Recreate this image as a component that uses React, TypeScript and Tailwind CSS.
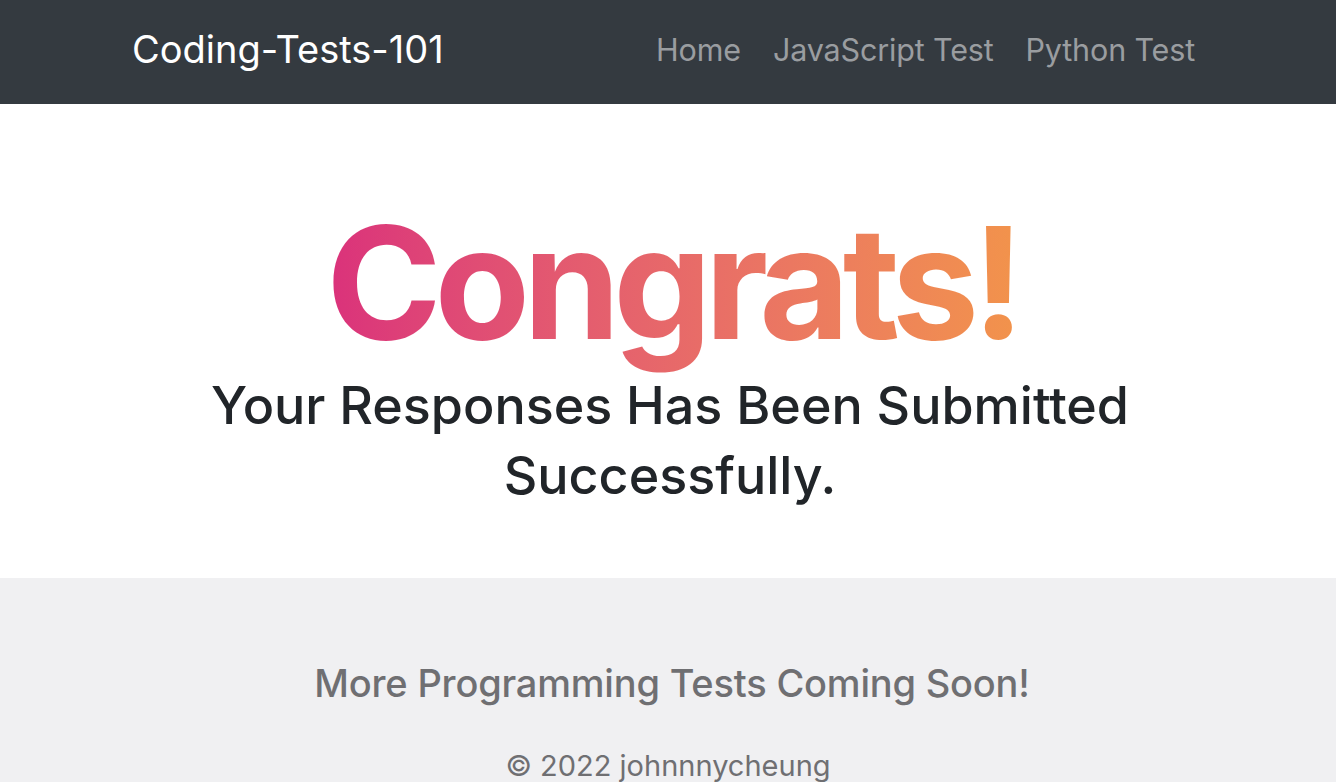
export default function App() {
  return (
    <div className="h-screen overflow-hidden bg-white font-['Inter','Noto_Sans',sans-serif] text-[#212529]">
      <Navbar />
      <main className="flex flex-col items-center h-[474px] pt-[101px] text-center">
        <h1 className="text-[156px] font-bold leading-none tracking-[-0.045em] bg-gradient-to-r from-[#da2f7b] to-[#f2934b] bg-clip-text text-transparent pb-[14px] pl-[8px]">
          Congrats!
        </h1>
        <p className="text-[52px] font-medium leading-[70px] w-[1000px] -mt-[4px] pl-[4px]">
          Your Responses Has Been Submitted
          <br />
          Successfully.
        </p>
      </main>
      <Footer />
    </div>
  );
}

function Navbar() {
  const links = ["Home", "JavaScript Test", "Python Test"];
  return (
    <nav className="h-[104px] bg-[#343a40]">
      <div className="flex h-full items-center justify-between pl-[132px] pr-[141px]">
        <a className="text-[38px] text-white leading-none pb-[6px]">Coding-Tests-101</a>
        <ul className="flex gap-[32px] pb-[4px]">
          {links.map((l) => (
            <li key={l} className="text-[30.5px] text-[#9a9da0] leading-none tracking-[-0.005em]">
              {l}
            </li>
          ))}
        </ul>
      </div>
    </nav>
  );
}

function Footer() {
  return (
    <footer className="bg-[#f0f0f2] flex flex-col items-center pt-[86px] text-[#6f6f72] h-[204px]">
      <p className="text-[38px] font-medium leading-none tracking-[-0.005em] pl-[8px]">More Programming Tests Coming Soon!</p>
      <p className="text-[29px] leading-none mt-[49px]">© 2022 johnnnycheung</p>
    </footer>
  );
}
